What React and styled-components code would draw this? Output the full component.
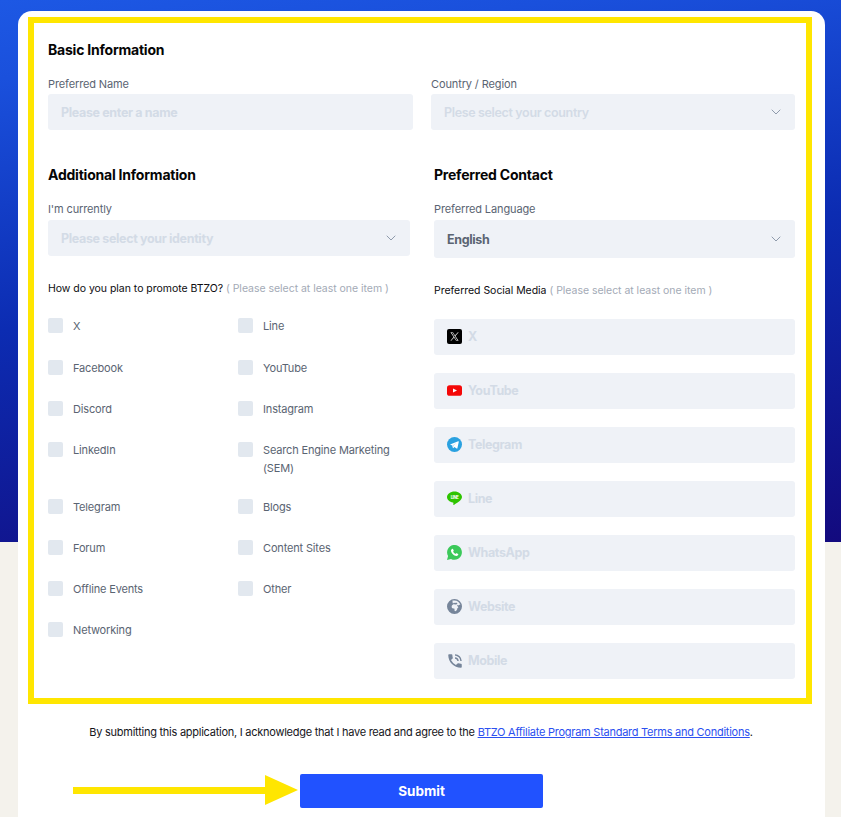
import React from "react";
import styled, { createGlobalStyle } from "styled-components";
import { ChevronDown } from "lucide-react";
import { FaEarthAfrica } from "react-icons/fa6";
import { MdPhoneInTalk } from "react-icons/md";

const GlobalStyle = createGlobalStyle`
  html, body {
    margin: 0;
    height: 817px;
    overflow: hidden;
  }
  body {
    font-family: "Inter", "Liberation Sans", sans-serif;
    background: linear-gradient(172deg, #1d58e4 0%, #1a50dc 12%, #0c2cb2 50%, #130a7e 100%) 0 0 / 100% 542px no-repeat, #f4f2ec;
  }
`;

const Card = styled.main`
  position: relative;
  box-sizing: border-box;
  width: 807px;
  height: 820px;
  margin: 11px 0 0 18px;
  padding: 6px 13px 0 10px;
  background: #fff;
  border-radius: 14px 14px 0 0;
`;

const Frame = styled.form`
  box-sizing: border-box;
  height: 687px;
  padding: 17px 11px 0 14px;
  border: 6px solid #ffe600;
`;

const TopGrid = styled.div`
  display: grid;
  grid-template-columns: 365px 364px;
  column-gap: 18px;
`;

const BottomGrid = styled.div`
  display: grid;
  grid-template-columns: 362px 361px;
  column-gap: 24px;
  margin-top: 35px;
`;

const Heading = styled.h2`
  margin: 0;
  height: 19px;
  font-size: 14px;
  line-height: 19px;
  font-weight: 700;
  letter-spacing: -0.22px;
  color: #050505;
`;

const Label = styled.div`
  margin: 17px 0 ${(p) => p.$gap}px;
  height: 17px;
  font-size: 11px;
  line-height: 17px;
  letter-spacing: -0.12px;
  color: #5a6472;
`;

const fieldBox = `
  box-sizing: border-box;
  width: 100%;
  height: 36px;
  border: 0;
  border-radius: 3px;
  background: #eff2f7;
  font-family: inherit;
  font-size: 12.5px;
  font-weight: 700;
  letter-spacing: -0.35px;
`;

const TextInput = styled.input`
  ${fieldBox}
  display: block;
  padding: 0 13px;
  outline: none;
  &::placeholder {
    color: #d3dbe6;
    opacity: 1;
  }
`;

const Select = styled.div`
  ${fieldBox}
  display: flex;
  align-items: center;
  justify-content: space-between;
  height: ${(p) => p.$height || 36}px;
  padding: 0 11px 0 13px;
  color: ${(p) => (p.$filled ? "#5a6472" : "#d3dbe6")};
  font-weight: ${(p) => (p.$light ? 600 : 700)};
  svg {
    color: #8f9bac;
    flex: none;
  }
`;

const Question = styled.div`
  margin-top: 25px;
  height: 16px;
  font-size: 10.5px;
  line-height: 16px;
  letter-spacing: -0.03px;
  color: #0c0c0f;
  white-space: nowrap;
  span {
    color: #a3aab6;
  }
`;

const CheckGrid = styled.div`
  display: grid;
  grid-template-columns: 190px 172px;
  margin-top: 21px;
`;

const CheckItem = styled.label`
  display: flex;
  gap: 10px;
  min-height: 41px;
  margin-bottom: ${(p) => (p.$wrap ? 16 : 0)}px;
  font-size: 11px;
  line-height: 18px;
  letter-spacing: -0.16px;
  color: #5a6472;
  &:nth-child(-n + 2) {
    min-height: 42px;
  }
`;

const CheckBox = styled.input.attrs({ type: "checkbox" })`
  appearance: none;
  flex: none;
  width: 15px;
  height: 15px;
  margin: 0;
  border-radius: 2px;
  background: #e2e8ef;
`;

const CheckText = styled.span`
  margin-top: -1px;
`;

const SocialList = styled.div`
  display: flex;
  flex-direction: column;
  gap: 18px;
  margin-top: 20px;
`;

const SocialField = styled.div`
  display: flex;
  align-items: center;
  gap: 6px;
  box-sizing: border-box;
  height: 36px;
  padding: 0 13px 1px;
  border-radius: 3px;
  background: #eff2f7;
  font-size: 12.5px;
  font-weight: 700;
  letter-spacing: -0.4px;
  color: #d3dbe6;
  svg {
    flex: none;
    display: block;
  }
`;

const Terms = styled.p`
  margin: 20px 0 0;
  padding-left: 2px;
  text-align: center;
  font-size: 11px;
  line-height: 17px;
  letter-spacing: -0.255px;
  color: #15151a;
  a {
    color: #2b50f0;
    text-decoration: underline;
  }
`;

const SubmitRow = styled.div`
  display: flex;
  justify-content: center;
  margin-top: 33px;
  padding-left: 3px;
`;

const Submit = styled.button`
  width: 243px;
  height: 34px;
  border: 0;
  border-radius: 2px;
  background: #2152ff;
  color: #fff;
  font-family: inherit;
  font-size: 13.5px;
  font-weight: 700;
`;

const Arrow = styled.svg`
  position: absolute;
  left: 55px;
  top: 763px;
`;

const XIcon = () => (
  <svg width="15" height="15" viewBox="0 0 15 15">
    <rect width="15" height="15" rx="2" fill="#000" />
    <path d="M3.4 3.2h2.5l5.7 8.6H9.1zM4.6 3.8l4.8 7.4h1L5.6 3.8z" fill="#e8e8e8" fillRule="evenodd" />
    <path d="M10.9 3.2h.8L8.2 7.2l-.4-.6zM3.4 11.8h.8l3-3.4-.4-.6z" fill="#e8e8e8" />
  </svg>
);

const YoutubeIcon = () => (
  <svg width="15" height="15" viewBox="0 0 15 15">
    <rect y="2.2" width="15" height="10.6" rx="2.6" fill="#f40808" />
    <path d="M6 5.4l4 2.1-4 2.1z" fill="#fff" />
  </svg>
);

const TelegramIcon = () => (
  <svg width="15" height="15" viewBox="0 0 15 15">
    <circle cx="7.5" cy="7.5" r="7.5" fill="#2aa1e0" />
    <path d="M3 7.4l8.2-3.2c.4-.1.7.1.6.6l-1.4 6.5c-.1.4-.4.5-.8.3L7.4 10l-1 1c-.2.2-.4.2-.5-.1l-.7-2.4z" fill="#fff" />
    <path d="M5.5 8.4l4-2.6-3 3-.2 1.6z" fill="#b9dcf0" />
  </svg>
);

const LineIcon = () => (
  <svg width="15" height="15" viewBox="0 0 15 15">
    <path d="M7.5.4C3.4.4 0 2.9 0 6.1c0 2.8 2.5 5 5.9 5.5.5.1.6.4.5.8l-.1 1.2c0 .4.3.6.7.3 1.9-1.1 8-4.2 8-7.8C15 2.9 11.6.4 7.5.4z" fill="#2ec400" />
    <text x="7.5" y="7.6" textAnchor="middle" fontSize="4.2" fontWeight="700" fill="#fff" fontFamily="Inter, sans-serif">LINE</text>
  </svg>
);

const WhatsappIcon = () => (
  <svg width="15" height="15" viewBox="0 0 15 15">
    <path d="M0 15l1.1-3.9A7.4 7.4 0 1 1 4 13.9z" fill="#3bc95a" />
    <path d="M5.2 3.9c.3-.2.6-.2.8.1l.7 1.5c.1.2 0 .4-.1.6l-.5.6c.5 1 1.4 1.8 2.4 2.3l.6-.7c.2-.2.4-.2.6-.1l1.4.7c.2.1.3.3.2.6-.2 1-1.1 1.5-2 1.4C7 10.6 4.4 8.2 4 5.9c-.1-.8.4-1.6 1.2-2z" fill="#fff" />
  </svg>
);

const GlobeIcon = () => <FaEarthAfrica size={15} color="#76859a" />;

const PhoneIcon = styled(MdPhoneInTalk)`
  width: 18px;
  height: 18px;
  margin: 0 -1.5px;
  color: #76859a;
`;

const socials = [
  ["X", XIcon],
  ["YouTube", YoutubeIcon],
  ["Telegram", TelegramIcon],
  ["Line", LineIcon],
  ["WhatsApp", WhatsappIcon],
  ["Website", GlobeIcon],
  ["Mobile", PhoneIcon],
];

const channels = [
  ["X"],
  ["Line"],
  ["Facebook"],
  ["YouTube"],
  ["Discord"],
  ["Instagram"],
  ["LinkedIn", true],
  ["Search Engine Marketing (SEM)", true],
  ["Telegram"],
  ["Blogs"],
  ["Forum"],
  ["Content Sites"],
  ["Offline Events"],
  ["Other"],
  ["Networking"],
];

export default function App() {
  return (
    <>
      <GlobalStyle />
      <Card>
        <Frame>
          <Heading>Basic Information</Heading>
          <TopGrid>
            <div>
              <Label $gap={1}>Preferred Name</Label>
              <TextInput placeholder="Please enter a name" />
            </div>
            <div>
              <Label $gap={1}>Country / Region</Label>
              <Select $light>
                Plese select your country
                <ChevronDown size={16} strokeWidth={1.5} />
              </Select>
            </div>
          </TopGrid>
          <BottomGrid>
            <div>
              <Heading>Additional Information</Heading>
              <Label $gap={2}>I'm currently</Label>
              <Select>
                Please select your identity
                <ChevronDown size={16} strokeWidth={1.5} />
              </Select>
              <Question>
                How do you plan to promote BTZO? <span>( Please select at least one item )</span>
              </Question>
              <CheckGrid>
                {channels.map(([name, wrap]) => (
                  <CheckItem key={name} $wrap={wrap}>
                    <CheckBox />
                    <CheckText>{name}</CheckText>
                  </CheckItem>
                ))}
              </CheckGrid>
            </div>
            <div>
              <Heading>Preferred Contact</Heading>
              <Label $gap={2}>Preferred Language</Label>
              <Select $filled $height={38}>
                English
                <ChevronDown size={16} strokeWidth={1.5} />
              </Select>
              <Question>
                Preferred Social Media <span>( Please select at least one item )</span>
              </Question>
              <SocialList>
                {socials.map(([name, Icon]) => (
                  <SocialField key={name}>
                    <Icon />
                    {name}
                  </SocialField>
                ))}
              </SocialList>
            </div>
          </BottomGrid>
        </Frame>
        <Terms>
          By submitting this application, I acknowledge that I have read and agree to the{" "}
          <a href="#terms">BTZO Affiliate Program Standard Terms and Conditions</a>.
        </Terms>
        <SubmitRow>
          <Submit type="button">Submit</Submit>
        </SubmitRow>
        <Arrow width="226" height="32" viewBox="0 0 226 32">
          <path d="M0 13h192V1l33 15-33 15V20H0z" fill="#ffe600" />
        </Arrow>
      </Card>
    </>
  );
}
